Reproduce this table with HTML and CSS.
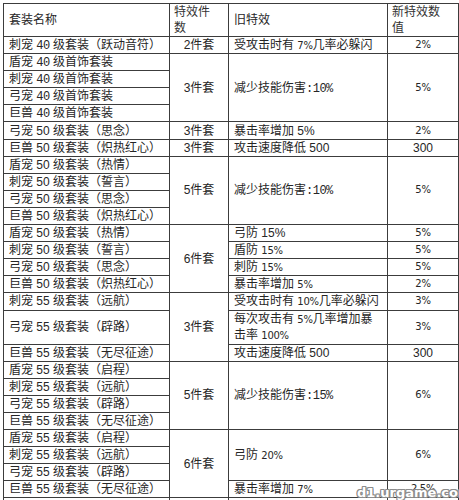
FILE: index.html
```html
<!DOCTYPE html>
<html lang="zh">
<head>
<meta charset="utf-8">
<title>套装特效</title>
<link rel="stylesheet" href="styles.css">
</head>
<body>
<div class="page">
<table class="sets">
<colgroup><col class="c1"><col class="c2"><col class="c3"><col class="c4"></colgroup>
<tr class="head">
  <td>套装名称</td>
  <td class="hl">特效件<br>数</td>
  <td>旧特效</td>
  <td class="hl">新特效数<br>值</td>
</tr>
<tr><td>刺宠 <span class="m">40</span> 级套装（跃动音符）</td><td class="ct">2件套</td><td>受攻击时有 <span class="s">7%</span>几率必躲闪</td><td class="ct s">2%</td></tr>
<tr><td>盾宠 <span class="m">40</span> 级首饰套装</td><td class="ct" rowspan="4">3件套</td><td rowspan="4">减少技能伤害<span class="m">:10%</span></td><td class="ct s" rowspan="4">5%</td></tr>
<tr><td>刺宠 <span class="m">40</span> 级首饰套装</td></tr>
<tr><td>弓宠 <span class="m">40</span> 级首饰套装</td></tr>
<tr><td>巨兽 <span class="m">40</span> 级首饰套装</td></tr>
<tr><td>弓宠 50 级套装（思念）</td><td class="ct">3件套</td><td>暴击率增加 5%</td><td class="ct s">2%</td></tr>
<tr><td>巨兽 50 级套装（炽热红心）</td><td class="ct">3件套</td><td>攻击速度降低 500</td><td class="ct">300</td></tr>
<tr><td>盾宠 50 级套装（热情）</td><td class="ct" rowspan="4">5件套</td><td rowspan="4">减少技能伤害<span class="m">:10%</span></td><td class="ct s" rowspan="4">5%</td></tr>
<tr><td>刺宠 50 级套装（誓言）</td></tr>
<tr><td>弓宠 50 级套装（思念）</td></tr>
<tr><td>巨兽 50 级套装（炽热红心）</td></tr>
<tr><td>盾宠 50 级套装（热情）</td><td class="ct" rowspan="4">6件套</td><td>弓防 15%</td><td class="ct s">5%</td></tr>
<tr><td>刺宠 50 级套装（誓言）</td><td>盾防 <span class="s">15%</span></td><td class="ct s">5%</td></tr>
<tr><td>弓宠 50 级套装（思念）</td><td>刺防 <span class="s">15%</span></td><td class="ct s">5%</td></tr>
<tr><td>巨兽 50 级套装（炽热红心）</td><td>暴击率增加 <span class="s">5%</span></td><td class="ct s">2%</td></tr>
<tr><td>刺宠 55 级套装（远航）</td><td class="ct" rowspan="3">3件套</td><td>受攻击时有 <span class="s">10%</span>几率必躲闪</td><td class="ct s">3%</td></tr>
<tr class="dbl"><td>弓宠 55 级套装（辟路）</td><td>每次攻击有 <span class="s">5%</span>几率增加暴<br>击率 <span class="s">100%</span></td><td class="ct s">3%</td></tr>
<tr><td>巨兽 55 级套装（无尽征途）</td><td>攻击速度降低 500</td><td class="ct">300</td></tr>
<tr><td>盾宠 55 级套装（启程）</td><td class="ct" rowspan="4">5件套</td><td rowspan="4">减少技能伤害<span class="m">:15%</span></td><td class="ct s" rowspan="4">6%</td></tr>
<tr><td>刺宠 55 级套装（远航）</td></tr>
<tr><td>弓宠 55 级套装（辟路）</td></tr>
<tr><td>巨兽 55 级套装（无尽征途）</td></tr>
<tr><td>盾宠 55 级套装（启程）</td><td class="ct" rowspan="4">6件套</td><td rowspan="3">弓防 <span class="s">20%</span></td><td class="ct s" rowspan="3">6%</td></tr>
<tr><td>刺宠 55 级套装（远航）</td></tr>
<tr><td>弓宠 55 级套装（辟路）</td></tr>
<tr><td>巨兽 55 级套装（无尽征途）</td><td>暴击率增加 <span class="s">7%</span></td><td class="ct s">2.5%</td></tr>
<tr><td>&nbsp;</td><td></td><td></td><td></td></tr>
</table>
<div class="mark">d1.urgame.com</div>
</div>
</body>
</html>
```

FILE: styles.css
```css
html, body {
  margin: 0;
  padding: 0;
  background: #fff;
  overflow: hidden;
}
.page {
  position: relative;
  padding: 3px 0 0 3px;
  height: 497px;
  overflow: hidden;
}
.sets {
  border-collapse: collapse;
  table-layout: fixed;
  width: 455px;
  font-family: "Liberation Sans", "Noto Sans CJK SC", sans-serif;
  font-size: 12px;
  color: #262626;
}
.c1 { width: 166px; }
.c2 { width: 59px; }
.c3 { width: 159px; }
.c4 { width: 71px; }
.sets td {
  border: 1px solid #3c3c3c;
  padding: 0 0 0 5px;
  height: 16px;
  line-height: 16px;
  white-space: nowrap;
  vertical-align: middle;
  overflow: hidden;
}
.sets tr { height: 17.1px; }
.sets tr.head { height: 33px; }
.sets tr.dbl { height: 34px; }
.sets td.hl { padding-left: 4px; color: #333; }
.sets td.ct { text-align: center; padding-left: 0; }
.m { font-family: "Liberation Mono", "Noto Sans CJK SC", monospace; font-size: 12px; letter-spacing: -0.5px; line-height: 10px; }
span.s { line-height: 10px; }
.s { font-family: "DejaVu Sans", "Noto Sans CJK SC", sans-serif; font-size: 10px; letter-spacing: -0.3px; }
.mark {
  position: absolute;
  left: 357px;
  top: 485px;
  font-family: "DejaVu Sans", sans-serif;
  font-weight: bold;
  font-size: 13px;
  color: #fff;
  text-shadow: 1px 0 0 #8c8c8c, -1px 0 0 #8c8c8c, 0 1px 0 #8c8c8c, 0 -1px 0 #8c8c8c, 1px 1px 0 #8c8c8c, -1px -1px 0 #8c8c8c, 1px -1px 0 #8c8c8c, -1px 1px 0 #8c8c8c;
}
```
